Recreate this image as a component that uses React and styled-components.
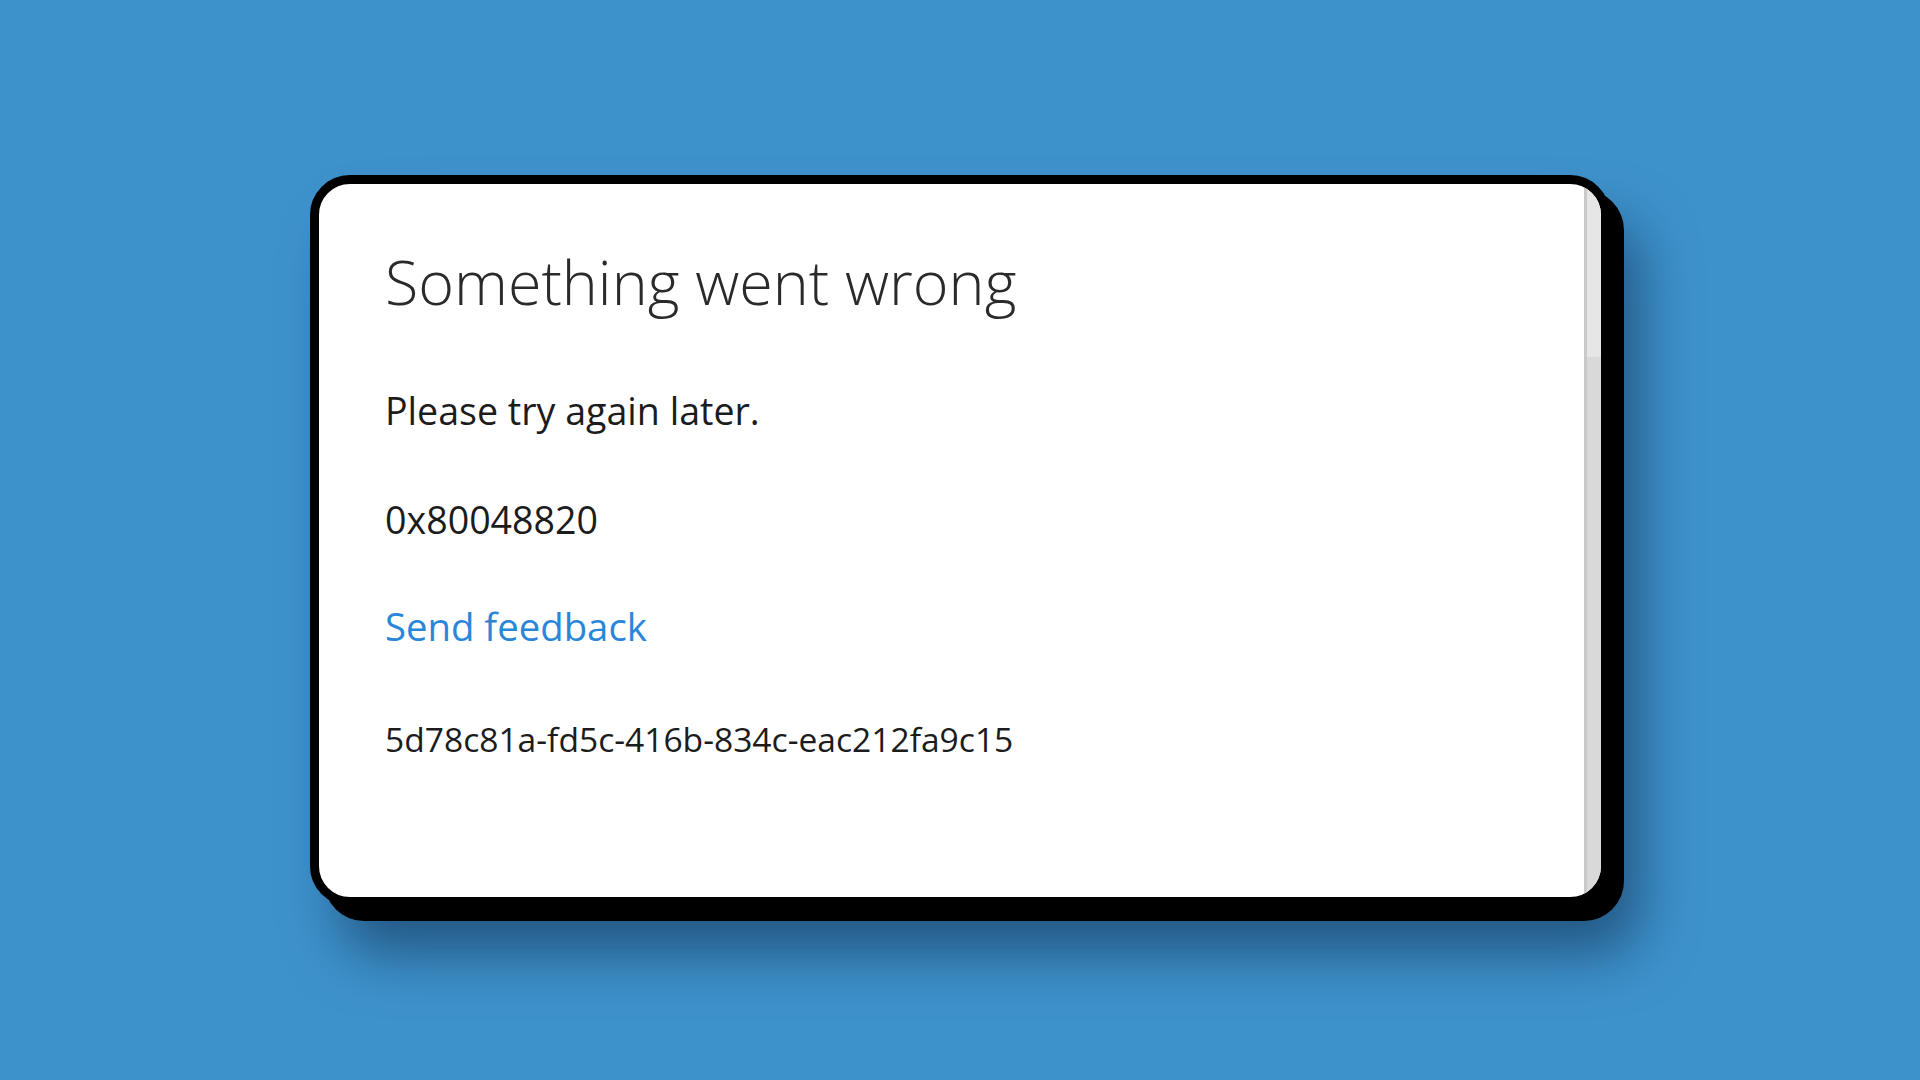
import React from "react";
import styled, { createGlobalStyle } from "styled-components";

const GlobalStyle = createGlobalStyle`
  html, body {
    margin: 0;
    padding: 0;
    background: #3e92cc;
  }
  * {
    box-sizing: border-box;
  }
`;

export default function App() {
  return (
    <>
      <GlobalStyle />
      <Page>
        <Dialog>
          <Content>
            <Title>Something went wrong</Title>
            <Message $top={73}>Please try again later.</Message>
            <Message $top={61}>0x80048820</Message>
            <FeedbackLink href="#" onClick={(e) => e.preventDefault()}>
              Send feedback
            </FeedbackLink>
            <CorrelationId>5d78c81a-fd5c-416b-834c-eac212fa9c15</CorrelationId>
          </Content>
          <Scrollbar>
            <Track />
            <Thumb />
          </Scrollbar>
        </Dialog>
      </Page>
    </>
  );
}

const Page = styled.div`
  width: 100%;
  height: 100vh;
  display: flex;
  align-items: center;
  justify-content: center;
  background: #3e92cc;
  font-family: "Open Sans", "Noto Sans", sans-serif;
`;

const Dialog = styled.div`
  width: 1300px;
  height: 731px;
  display: flex;
  background: #ffffff;
  border: 9px solid #000000;
  border-radius: 40px;
  overflow: hidden;
  box-shadow: 14px 15px 0 #000000, 30px 48px 55px rgba(10, 30, 60, 0.5);
`;

const Content = styled.div`
  flex: 1;
  display: flex;
  flex-direction: column;
  align-items: flex-start;
  padding: 66px 0 0 66px;
  color: #1c1c1c;
`;

const Title = styled.h1`
  margin: 0;
  font-size: 61px;
  line-height: 64px;
  font-weight: 300;
  color: #2a2a2a;
`;

const Message = styled.p`
  margin: ${(p) => p.$top}px 0 0;
  font-size: 37.6px;
  line-height: 48px;
  font-weight: 400;
`;

const FeedbackLink = styled.a`
  margin-top: 58px;
  font-size: 38.3px;
  line-height: 48px;
  color: #2a86d8;
  text-decoration: none;
`;

const CorrelationId = styled.p`
  margin: 69px 0 0;
  font-size: 33.6px;
  line-height: 40px;
  font-weight: 400;
`;

const Scrollbar = styled.div`
  width: 17px;
  display: flex;
  flex-direction: column;
  border-left: 3px solid #c9c9c9;
`;

const Track = styled.div`
  height: 173px;
  background: #e6e6e6;
`;

const Thumb = styled.div`
  flex: 1;
  background: #d9d9d9;
`;
